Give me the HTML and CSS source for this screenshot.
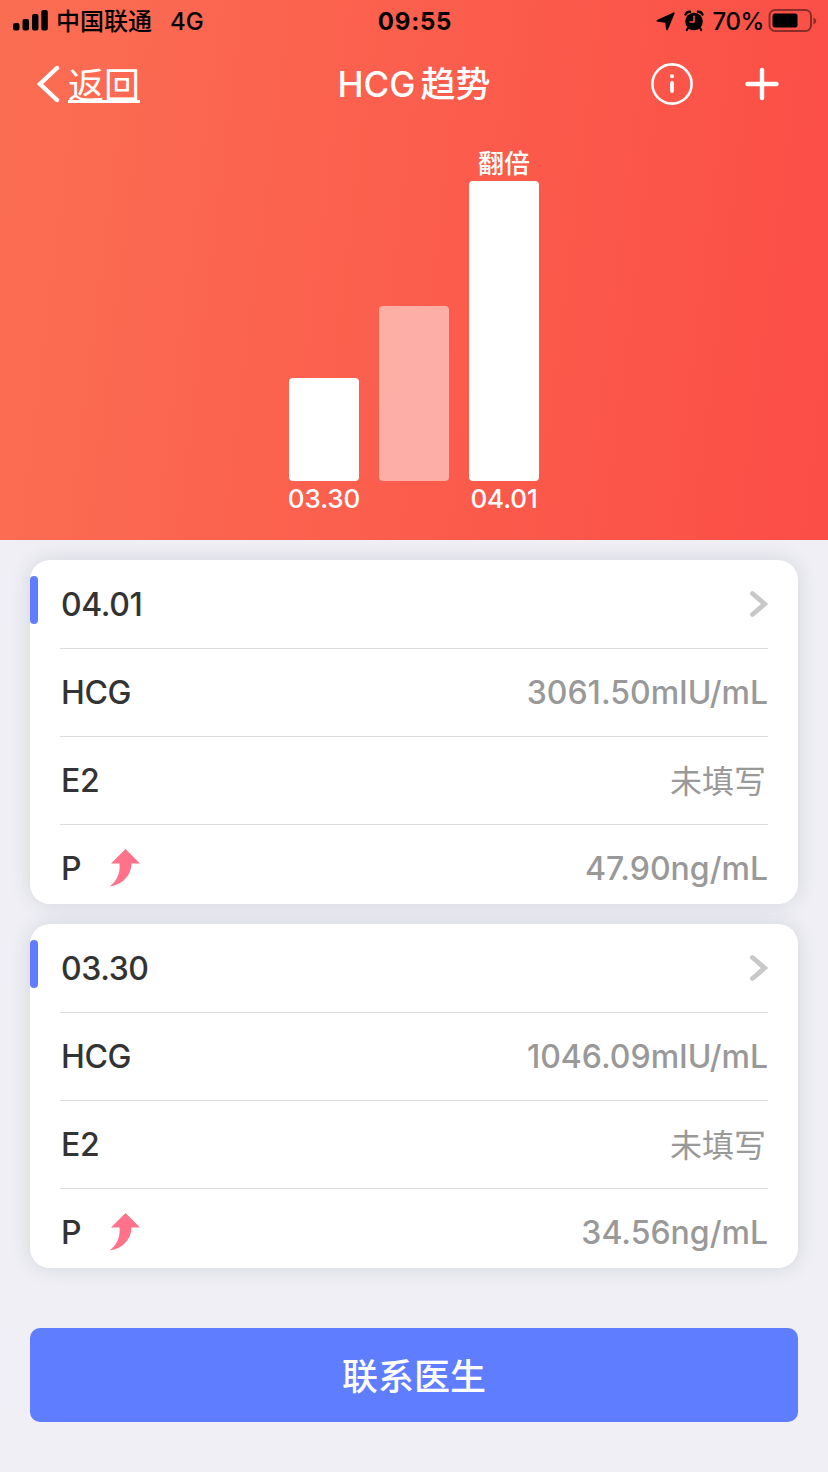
FILE: index.html
```html
<!DOCTYPE html>
<html lang="zh-CN">
<head>
  <meta charset="UTF-8" />
  <meta name="viewport" content="width=device-width, initial-scale=1.0" />
  <title>HCG趋势</title>
  <link rel="stylesheet" href="styles.css">
</head>
<body>
  <header class="header">
    <div class="status-bar">
      <div class="status-left">
        <svg class="signal" width="35" height="22" viewBox="0 0 35 22">
          <rect x="0" y="13" width="6.5" height="7.500" rx="2" />
          <rect x="9.5" y="9" width="6.5" height="11.500" rx="2" />
          <rect x="19" y="4" width="6.500" height="16.500" rx="2" />
          <rect x="28.300" y="0" width="6.500" height="20.500" rx="2" />
        </svg>
        <span class="carrier">中国联通</span>
        <span class="network">4G</span>
      </div>
      <div class="status-time">09:55</div>
      <div class="status-right">
        <svg class="location" width="19" height="19" viewBox="0 0 19 19">
          <path d="M17.800 1.200 L11 17.300 L10 9.800 L1.500 8.800 Z" stroke="#000" stroke-width="1.800" stroke-linejoin="round" />
        </svg>
        <svg class="alarm" width="20" height="22" viewBox="0 0 20 22">
          <circle cx="10" cy="11.500" r="8.800" />
          <path d="M4 18 L2.800 20 M16 18 L17.200 20" stroke="#000" stroke-width="2.200" stroke-linecap="round" />
          <path d="M1.500 4.500 Q3 1.500 6 1.800 M18.500 4.500 Q17 1.500 14 1.800" fill="none" stroke="#000" stroke-width="2.400" stroke-linecap="round" />
          <path class="alarm-hands" d="M10 5.800 V12 H5.500" />
        </svg>
        <span class="percent">70%</span>
        <svg class="battery" width="50" height="24" viewBox="0 0 50 24">
          <rect class="battery-case" x="1.500" y="1" width="41.500" height="21" rx="5.500" />
          <rect x="4.500" y="4.500" width="25" height="14" rx="2.500" />
          <path class="battery-cap" d="M45.500 8.500 Q48.300 9.500 48.300 12 T45.500 15.500 Z" />
        </svg>
      </div>
    </div>

    <nav class="nav">
      <a class="back">
        <svg width="24" height="38" viewBox="0 0 24 38">
          <path d="M21 3 L4 19 L21 35" />
        </svg>
        <span>返回</span>
      </a>
      <h1>HCG<span>趋势</span></h1>
      <div class="actions">
        <svg class="info" width="42" height="42" viewBox="0 0 42 42">
          <circle class="ring" cx="21" cy="21" r="19.600" />
          <circle class="dot" cx="21" cy="13.200" r="2" />
          <path d="M21 20 V28" />
        </svg>
        <svg class="plus" width="34" height="34" viewBox="0 0 34 34">
          <path d="M2.500 17 H31.500 M17 3 V31" />
        </svg>
      </div>
    </nav>

    <div class="chart">
      <div class="column">
        <div class="bar" style="height: 103px"></div>
        <div class="date">03.30</div>
      </div>
      <div class="column">
        <div class="bar faded" style="height: 175px"></div>
        <div class="date"></div>
      </div>
      <div class="column">
        <div class="tip">翻倍</div>
        <div class="bar" style="height: 300px"></div>
        <div class="date">04.01</div>
      </div>
    </div>
  </header>

  <main>
    <section class="card">
      <div class="row title">
        <span>04.01</span>
        <svg class="more" width="20" height="28" viewBox="0 0 20 28"><path d="M4.500 3.500 L16.500 14 L4.500 24.500" /></svg>
      </div>
      <div class="row"><span>HCG</span><span class="value">3061.50mIU/mL</span></div>
      <div class="row"><span>E2</span><span class="value empty">未填写</span></div>
      <div class="row">
        <span>P</span>
        <svg class="rise" width="32" height="38" viewBox="0 0 32 38"><path d="M16.500 0 L31 14.500 H22.500 C22.500 26 14 35.500 0.500 37.500 C8 32 11.500 24 10.500 14.500 H2 Z" /></svg>
        <span class="value">47.90ng/mL</span>
      </div>
    </section>

    <section class="card">
      <div class="row title">
        <span>03.30</span>
        <svg class="more" width="20" height="28" viewBox="0 0 20 28"><path d="M4.500 3.500 L16.500 14 L4.500 24.500" /></svg>
      </div>
      <div class="row"><span>HCG</span><span class="value">1046.09mIU/mL</span></div>
      <div class="row"><span>E2</span><span class="value empty">未填写</span></div>
      <div class="row">
        <span>P</span>
        <svg class="rise" width="32" height="38" viewBox="0 0 32 38"><path d="M16.500 0 L31 14.500 H22.500 C22.500 26 14 35.500 0.500 37.500 C8 32 11.500 24 10.500 14.500 H2 Z" /></svg>
        <span class="value">34.56ng/mL</span>
      </div>
    </section>

    <button class="contact">联系医生</button>
  </main>
</body>
</html>
```

FILE: styles.css
```css
* {
  box-sizing: border-box;
}
body {
  margin: 0;
  min-height: 1472px;
  font-family: Inter, "Noto Sans CJK SC", sans-serif;
  background-color: #efeff5;
  color: #333;
}
svg {
  display: block;
  flex-shrink: 0;
}
.header {
  height: 540px;
  background: linear-gradient(97deg, #fb6d53 4%, #fb4e46 98%);
  color: #fff;
}

/* status bar */
.status-bar {
  display: grid;
  grid-template-columns: 1fr auto 1fr;
  align-items: center;
  height: 42px;
  padding: 0 11px 0 13px;
  color: #000;
  font-size: 24px;
  font-weight: 500;
  line-height: 42px;
}
.status-left, .status-right {
  display: flex;
  align-items: center;
}
.status-right {
  justify-content: flex-end;
}
.carrier {
  margin-left: 8px;
  padding-top: 2px;
  line-height: 40px;
}
.network {
  margin-left: 18px;
  padding-top: 2px;
  line-height: 40px;
}
.status-time {
  padding-top: 2px;
  line-height: 40px;
  font-weight: 700;
  letter-spacing: 0.8px;
}
.alarm {
  margin: 0 9px;
}
.percent {
  padding-top: 2px;
  line-height: 40px;
  letter-spacing: -0.4px;
}
.battery {
  margin-left: 4px;
  margin-right: -1px;
}
.alarm-hands {
  fill: none;
  stroke: #fc5249;
  stroke-width: 1.6;
}
.battery-case {
  fill: none;
  stroke: #000;
  stroke-opacity: 0.45;
  stroke-width: 2;
}
.battery-cap {
  fill-opacity: 0.45;
}

/* nav */
.nav {
  display: grid;
  grid-template-columns: 1fr auto 1fr;
  align-items: center;
  height: 84px;
  padding: 0 36px;
}
.nav path {
  fill: none;
  stroke: #fff;
  stroke-width: 4.4;
  stroke-linecap: round;
}
.back {
  display: flex;
  align-items: center;
  gap: 8px;
  font-size: 36px;
  line-height: 36px;
}
.back span {
  height: 37px;
  padding-top: 2px;
  border-bottom: 3px solid #fff;
}
h1 {
  margin: 0;
  font-size: 35px;
  font-weight: 500;
  line-height: 48px;
}
h1 span {
  margin-left: 5px;
}
.actions {
  display: flex;
  align-items: center;
  justify-content: flex-end;
  gap: 52px;
  margin-right: 13px;
}
.ring {
  fill: none;
  stroke: #fff;
  stroke-width: 2.6;
}
.dot {
  fill: #fff;
}
.nav .info path {
  stroke-width: 3.8;
}

/* chart */
.chart {
  display: flex;
  justify-content: center;
  align-items: flex-end;
  gap: 20px;
  height: 390px;
}
.column {
  width: 70px;
  font-size: 26px;
  font-weight: 500;
  line-height: 36px;
  text-align: center;
  white-space: nowrap;
}
.tip {
  line-height: 34px;
}
.bar {
  border-radius: 4px;
  background-color: #fff;
}
.faded {
  background-color: rgba(255, 255, 255, 0.5);
}
.date {
  height: 35px;
  margin: 0 -5px;
  letter-spacing: -0.1px;
}

/* cards */
main {
  display: flex;
  flex-direction: column;
  gap: 20px;
  padding: 20px 30px 0;
}
.card {
  height: 344px;
  padding: 0 30px;
  border-radius: 20px;
  background-color: #fff;
  box-shadow: 0 0 20px rgba(60, 60, 80, 0.14);
}
.row {
  display: flex;
  align-items: center;
  height: 88px;
  padding-left: 1px;
  border-top: 1px solid #dcdcdc;
  font-size: 32px;
  font-weight: 550;
  letter-spacing: -0.4px;
}
.title {
  border-top-color: transparent;
}
.title::before {
  content: "";
  width: 8px;
  height: 48px;
  margin: -9px 23px 0 -31px;
  border-radius: 4px;
  background-color: #5f7dff;
}
.value, .more {
  margin-left: auto;
  color: #999;
}
.value {
  letter-spacing: 0;
}
.more {
  margin-top: -1px;
}
.empty {
  margin-right: 2px;
  padding-bottom: 3px;
  font-weight: 400;
}
.more path {
  fill: none;
  stroke: #c8c8c8;
  stroke-width: 4.8;
  stroke-linecap: round;
}
.rise {
  margin-top: -2px;
  margin-left: 28px;
  fill: #ff7289;
}
.contact {
  height: 94px;
  margin-top: 40px;
  padding-bottom: 4px;
  border: none;
  border-radius: 10px;
  background-color: #5f7dff;
  color: #fff;
  font-family: inherit;
  font-size: 36px;
  font-weight: 500;
}
```
